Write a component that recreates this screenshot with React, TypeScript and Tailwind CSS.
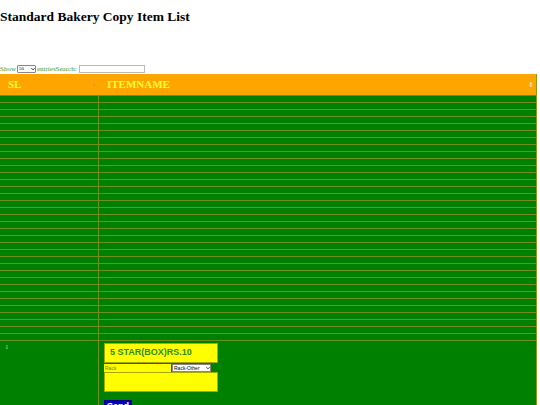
import React from 'react'

const emptyRows = Array.from({ length: 35 }, (_, i) => i)

function TinySelect({ label, width }: { label: string; width: string }) {
  return (
    <div className={`relative h-[8px] shrink-0 ${width}`}>
      <select
        className="absolute inset-0 block h-[8px] w-full appearance-none rounded-[1px] border border-[#888] bg-white p-0 pl-[1px] text-[5px] leading-[6px] text-black outline-none"
        defaultValue="x"
      >
        <option value="x">{label}</option>
      </select>
      <svg
        viewBox="0 0 10 10"
        className="pointer-events-none absolute right-[1px] top-[2px] h-[4px] w-[4px]"
      >
        <path d="M1 3 L5 7 L9 3" fill="none" stroke="#000" strokeWidth="2" />
      </svg>
    </div>
  )
}

export default function App() {
  return (
    <div className="w-[540px] h-[405px] overflow-hidden bg-white font-['Liberation_Serif',serif]">
      <h1 className="h-[64px] pt-[9px] text-[13.5px] font-bold leading-[16px] text-black">
        Standard Bakery Copy Item List
      </h1>

      {/* length + search */}
      <div className="flex h-[10px] items-center text-[7px] leading-none text-[#3a9a3a]">
        <span>Show</span>
        <div className="mx-[1px]">
          <TinySelect label="50" width="w-[19px]" />
        </div>
        <span>entriesSearch:</span>
        <input className="ml-[2px] h-[8px] w-[66px] border border-[#bbb] bg-white" />
      </div>

      <div className="w-[537px] border-r border-[#8a9a1a]">
        {/* header */}
        <div className="grid h-[21px] grid-cols-[99px_1fr] bg-[#ffa500] text-[11px] font-bold text-[#ffff33]">
          <div className="relative flex items-center pl-[8px]">
            SL
            <span className="absolute right-[3px] top-[7px] text-[5px] text-[#c9a060]">▲</span>
          </div>
          <div className="relative flex items-center pl-[8px]">
            ITEMNAME
            <span className="absolute right-[2px] top-[6px] text-[7px] font-normal text-[#ffe0a0]">⬍</span>
          </div>
        </div>

        {/* empty rows */}
        {emptyRows.map((i) => (
          <div key={i} className="grid h-[7px] grid-cols-[99px_1fr] border-t border-[#6f8f14] bg-[#008000]">
            <div className="border-r border-[#6f8f14]" />
            <div />
          </div>
        ))}

        {/* item row */}
        <div className="grid h-[70px] grid-cols-[99px_1fr] border-t border-[#6f8f14] bg-[#008000]">
          <div className="border-r border-[#6f8f14] pl-[5px] pt-[1px] text-[7px] text-[#90ee90]">1</div>
          <div className="pl-[5px] pt-[2px] font-['Liberation_Sans',Arial,sans-serif]">
            <div className="flex h-[20px] w-[114px] items-center border border-[#a8a800] bg-[#ffff00] pl-[5px] text-[9px] font-bold text-[#2e8b22]">
              5 STAR(BOX)RS.10
            </div>
            <div className="flex h-[9px] items-center">
              <input
                className="h-[8px] w-[67px] bg-[#ffff00] pl-[1px] text-[5px] text-[#6a8a00] outline-none"
                defaultValue="Rack"
              />
              <div className="ml-[1px]">
                <TinySelect label="Rack-Other" width="w-[39px]" />
              </div>
            </div>
            <div className="h-[20px] w-[114px] border border-[#a8a800] bg-[#ffff00]" />
            <button className="mt-[7px] h-[10px] w-[28px] border border-[#000080] bg-[#0000cc] text-[9px] font-bold leading-[10px] text-white">
              Send
            </button>
          </div>
        </div>
      </div>
    </div>
  )
}
